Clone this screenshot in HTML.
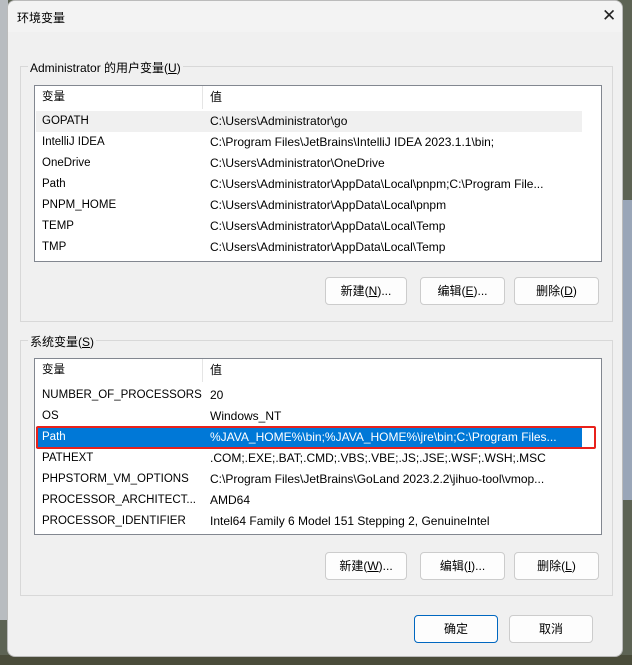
<!DOCTYPE html><html><head><meta charset="utf-8"><style>
*{box-sizing:border-box;margin:0;padding:0}
body{width:632px;height:665px;overflow:hidden;background:#5d6354;font-family:"Liberation Sans","Noto Sans CJK SC",sans-serif;font-size:12px;color:#000;position:relative}
.bgl{position:absolute;left:0;top:0;width:8px;height:620px;background:#b8bcc0}
.bgr{position:absolute;right:0;top:200px;width:9px;height:300px;background:#9aa6b8}
.bgb{position:absolute;left:0;top:655px;width:632px;height:10px;background:#4a4c3a}
.dlg{position:absolute;left:7px;top:0;width:616px;height:657px;background:#f0f0f0;border-radius:8px;border:1px solid #bbb;overflow:hidden}
.tb{height:31px;background:#f3f3f3;position:relative}
.tb .t{position:absolute;left:9px;top:8px;font-size:12px}
.tb .x{position:absolute;left:594px;top:5px;font-size:17px;color:#222}
.grp{position:absolute;border:1px solid #d8d8d8}
.leg{position:absolute;background:#f0f0f0;padding:0 2px;font-size:12px}
.lst{position:absolute;left:26px;width:568px;background:#fff;border:1px solid #828790}
.row{position:absolute;left:1px;height:21px;width:546px;line-height:21px;white-space:nowrap}
.row span{position:absolute;top:0}
.c1{left:6px;font-size:11.5px}.c2{left:174px}
.hdr{position:absolute;left:0;top:0;height:23px;width:547px;border-bottom:0}
.hdr .sep{position:absolute;left:167px;top:0;width:1px;height:23px;background:#e5e5e5}
.btn{position:absolute;height:28px;background:#fdfdfd;border:1px solid #ccc;border-radius:4px;text-align:center;line-height:26px;font-size:12px}
u{text-decoration:underline}
</style></head><body>
<div class="bgl"></div><div class="bgr"></div><div class="bgb"></div>
<div class="dlg">
<div class="tb"><span class="t">环境变量</span><span class="x">✕</span></div>
<div class="grp" style="left:12px;top:65px;width:593px;height:256px"></div>
<div class="leg" style="left:20px;top:58px">Administrator 的用户变量(<u>U</u>)</div>
<div class="lst" style="top:84px;height:177px">
 <div class="hdr"><div class="sep"></div><div class="row" style="top:1px"><span class="c1">变量</span><span class="c2">值</span></div></div>
 <div class="row" style="top:25px;background:#f0f0f0"><span class="c1">GOPATH</span><span class="c2">C:\Users\Administrator\go</span></div>
 <div class="row" style="top:46px"><span class="c1">IntelliJ IDEA</span><span class="c2">C:\Program Files\JetBrains\IntelliJ IDEA 2023.1.1\bin;</span></div>
 <div class="row" style="top:67px"><span class="c1">OneDrive</span><span class="c2">C:\Users\Administrator\OneDrive</span></div>
 <div class="row" style="top:88px"><span class="c1">Path</span><span class="c2">C:\Users\Administrator\AppData\Local\pnpm;C:\Program File...</span></div>
 <div class="row" style="top:109px"><span class="c1">PNPM_HOME</span><span class="c2">C:\Users\Administrator\AppData\Local\pnpm</span></div>
 <div class="row" style="top:130px"><span class="c1">TEMP</span><span class="c2">C:\Users\Administrator\AppData\Local\Temp</span></div>
 <div class="row" style="top:151px"><span class="c1">TMP</span><span class="c2">C:\Users\Administrator\AppData\Local\Temp</span></div>
</div>
<div class="btn" style="left:317px;top:276px;width:82px">新建(<u>N</u>)...</div>
<div class="btn" style="left:412px;top:276px;width:85px">编辑(<u>E</u>)...</div>
<div class="btn" style="left:506px;top:276px;width:85px">删除(<u>D</u>)</div>

<div class="grp" style="left:12px;top:339px;width:593px;height:256px"></div>
<div class="leg" style="left:20px;top:332px">系统变量(<u>S</u>)</div>
<div class="lst" style="top:357px;height:177px">
 <div class="hdr"><div class="sep"></div><div class="row" style="top:1px"><span class="c1">变量</span><span class="c2">值</span></div></div>
 <div class="row" style="top:26px"><span class="c1">NUMBER_OF_PROCESSORS</span><span class="c2">20</span></div>
 <div class="row" style="top:47px"><span class="c1">OS</span><span class="c2">Windows_NT</span></div>
 <div class="row" style="top:68px;background:#0078d7;color:#fff"><span class="c1">Path</span><span class="c2">%JAVA_HOME%\bin;%JAVA_HOME%\jre\bin;C:\Program Files...</span></div>
 <div class="row" style="top:89px"><span class="c1">PATHEXT</span><span class="c2">.COM;.EXE;.BAT;.CMD;.VBS;.VBE;.JS;.JSE;.WSF;.WSH;.MSC</span></div>
 <div class="row" style="top:110px"><span class="c1">PHPSTORM_VM_OPTIONS</span><span class="c2">C:\Program Files\JetBrains\GoLand 2023.2.2\jihuo-tool\vmop...</span></div>
 <div class="row" style="top:131px"><span class="c1">PROCESSOR_ARCHITECT...</span><span class="c2">AMD64</span></div>
 <div class="row" style="top:152px"><span class="c1">PROCESSOR_IDENTIFIER</span><span class="c2">Intel64 Family 6 Model 151 Stepping 2, GenuineIntel</span></div>
</div>
<div style="position:absolute;left:28px;top:425px;width:560px;height:23px;border:2px solid #e8211b;border-radius:2px"></div>
<div class="btn" style="left:317px;top:551px;width:82px">新建(<u>W</u>)...</div>
<div class="btn" style="left:412px;top:551px;width:85px">编辑(<u>I</u>)...</div>
<div class="btn" style="left:506px;top:551px;width:85px">删除(<u>L</u>)</div>
<div class="btn" style="left:406px;top:614px;width:84px;border-color:#0067c0">确定</div>
<div class="btn" style="left:501px;top:614px;width:84px">取消</div>
</div>
</body></html>
